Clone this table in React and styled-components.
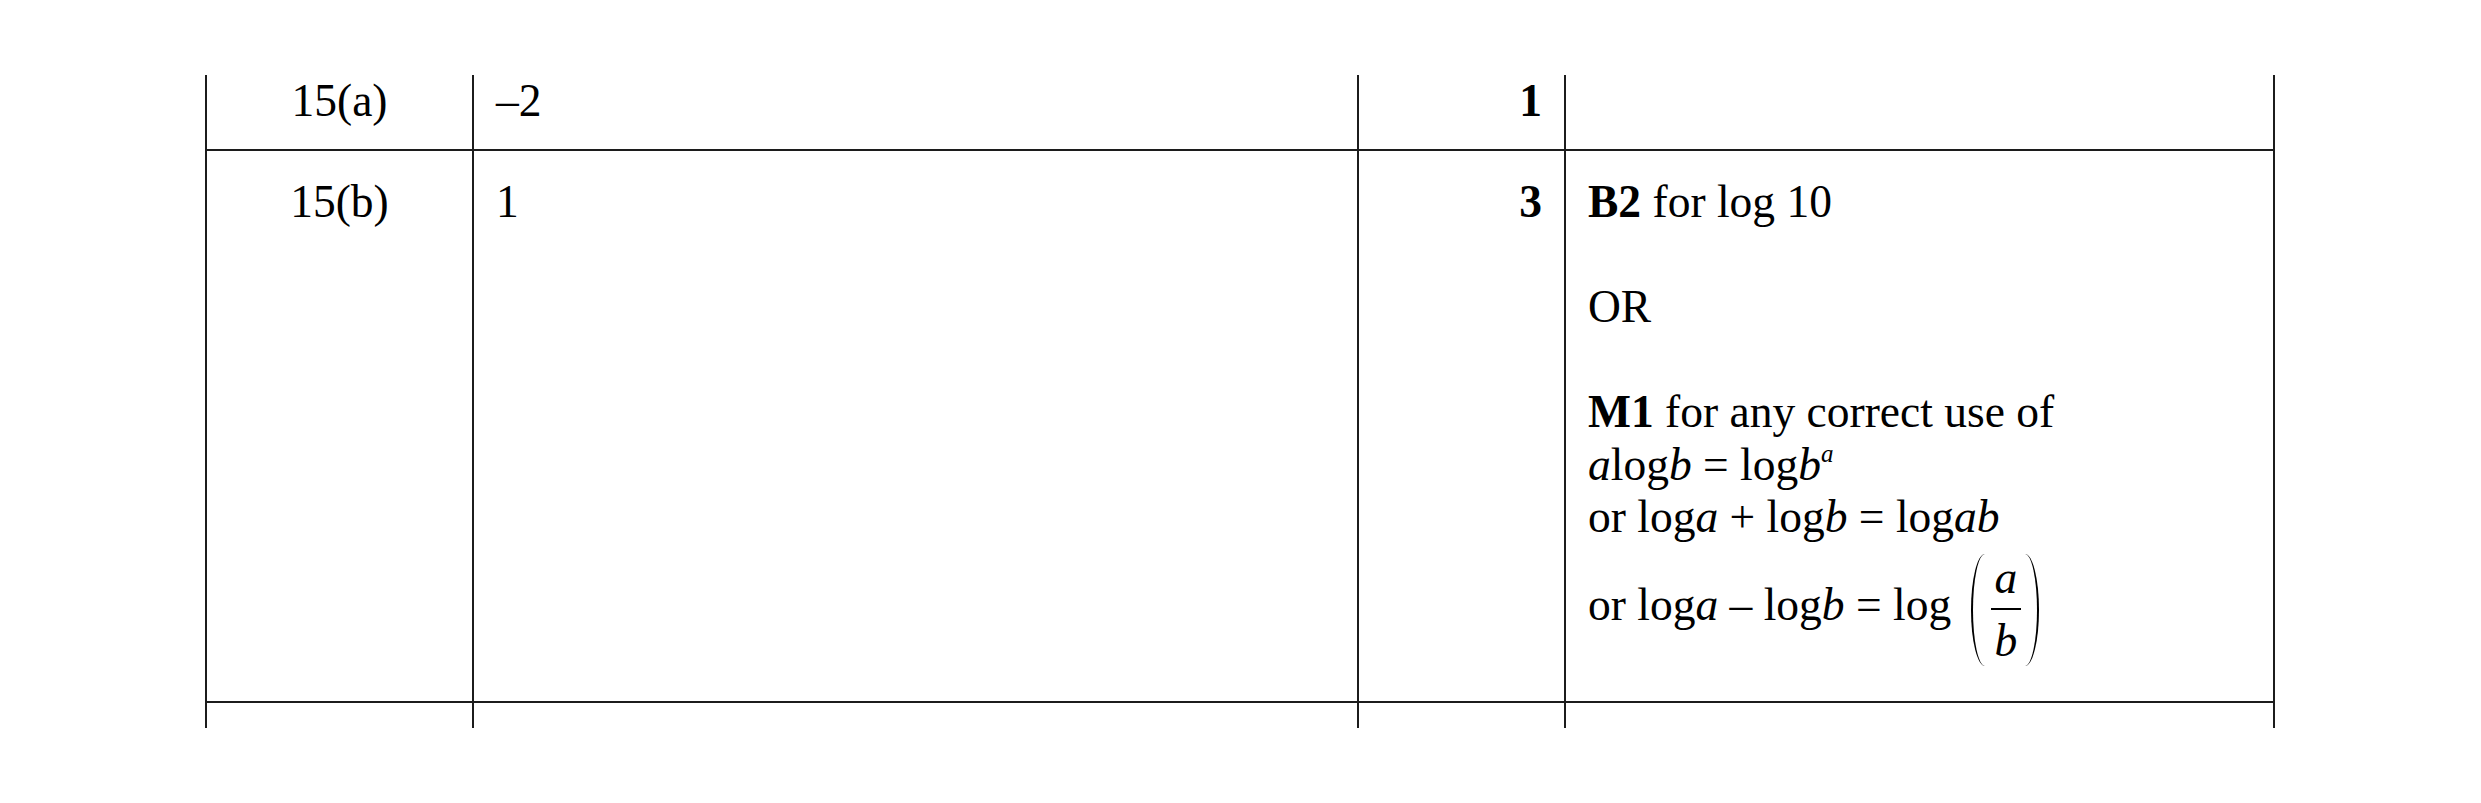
import React from "react";
import styled, { createGlobalStyle } from "styled-components";

const line = "2px solid #1c1c1c";

const GlobalStyle = createGlobalStyle`
  body {
    margin: 0;
    background: #ffffff;
    color: #000000;
    font-family: "Liberation Serif", "Times New Roman", serif;
  }
`;

const Page = styled.div`
  padding: 75px 0 0 205px;
  min-height: 803px;
  box-sizing: border-box;
`;

const Sheet = styled.div`
  display: grid;
  grid-template-columns: 269px 885px 207px 709px;
  width: 2070px;
  font-size: 45.5px;
  line-height: 52.5px;
`;

const Cell = styled.div`
  box-sizing: border-box;
  border-right: ${line};
  border-bottom: ${({ $open }) => ($open ? "none" : line)};
  padding: ${({ $pad }) => $pad || "25px 22px"};
  height: ${({ $h }) => ($h ? `${$h}px` : "auto")};
  text-align: ${({ $align }) => $align || "left"};
  font-weight: ${({ $bold }) => ($bold ? 700 : 400)};

  &:nth-child(4n + 1) {
    border-left: ${line};
  }
`;

const Para = styled.div`
  margin-bottom: ${({ $gap }) => ($gap ? "52.5px" : "0")};
`;

const B = styled.b`
  font-weight: 700;
`;

const Var = styled.i`
  font-style: italic;
`;

const Sup = styled.sup`
  font-style: italic;
  font-size: 0.55em;
  line-height: 0;
  vertical-align: 18px;
`;

const Fraction = styled.span`
  display: inline-flex;
  align-items: center;
  vertical-align: middle;
  padding: 10px 0;
  margin-left: 8px;
`;

const Paren = styled.span`
  display: block;
  width: 14px;
  height: 112px;
  box-sizing: border-box;
  border: 0 solid #000;
  ${({ $right }) =>
    $right
      ? `border-right-width: 2px; border-radius: 0 100% 100% 0 / 0 50% 50% 0;`
      : `border-left-width: 2px; border-radius: 100% 0 0 100% / 50% 0 0 50%;`}
`;

const Stack = styled.span`
  display: flex;
  flex-direction: column;
  align-items: stretch;
  margin: 0 4px 0 6px;
  text-align: center;
  font-style: italic;
`;

const Num = styled.span`
  line-height: 44px;
  padding: 0 4px 8px;
  border-bottom: 2px solid #000;
`;

const Den = styled.span`
  line-height: 44px;
  padding: 9px 4px 0;
`;

export default function App() {
  return (
    <Page>
      <GlobalStyle />
      <Sheet>
        <Cell $align="center" $pad="0 22px 21.5px">15(a)</Cell>
        <Cell $pad="0 22px 21.5px">–2</Cell>
        <Cell $align="right" $bold $pad="0 22px 21.5px">1</Cell>
        <Cell $pad="0 22px 21.5px" />

        <Cell $align="center">15(b)</Cell>
        <Cell>1</Cell>
        <Cell $align="right" $bold>3</Cell>
        <Cell>
          <Para $gap>
            <B>B2</B> for log 10
          </Para>
          <Para $gap>OR</Para>
          <Para>
            <B>M1</B> for any correct use of
          </Para>
          <Para>
            <Var>a</Var>log<Var>b</Var> = log<Var>b</Var>
            <Sup>a</Sup>
          </Para>
          <Para>
            or log<Var>a</Var> + log<Var>b</Var> = log<Var>ab</Var>
          </Para>
          <Para>
            or log<Var>a</Var> – log<Var>b</Var> = log{" "}
            <Fraction>
              <Paren />
              <Stack>
                <Num>a</Num>
                <Den>b</Den>
              </Stack>
              <Paren $right />
            </Fraction>
          </Para>
        </Cell>

        <Cell $open $pad="0" $h={25} />
        <Cell $open $pad="0" $h={25} />
        <Cell $open $pad="0" $h={25} />
        <Cell $open $pad="0" $h={25} />
      </Sheet>
    </Page>
  );
}
